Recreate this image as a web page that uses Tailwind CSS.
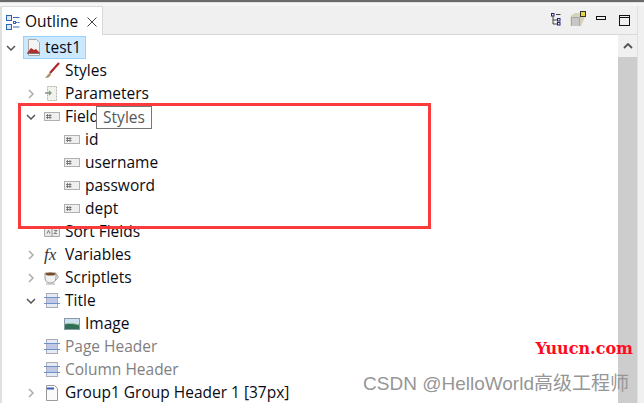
<!DOCTYPE html>
<html>
<head>
<meta charset="utf-8">
<script src="https://cdn.jsdelivr.net/npm/@tailwindcss/browser@4"></script>
</head>
<body class="bg-white">
<div class="relative w-[644px] h-[403px] overflow-hidden bg-[#f0f0f0] font-['Open_Sans','Noto_Sans',sans-serif] text-[15.5px] text-[#0a0a14]">
  <div class="h-[2px] bg-[#6a6a6a]"></div>
  <div class="h-[4px] bg-[#f6f6f6] border-t border-[#e2e2e2]"></div>
  <div class="flex h-[403px] w-[638px] border-l-2 border-[#d8d8d8] border-r border-[#e0e0e0]">
    <div class="flex flex-col w-full">
      <div class="flex h-[29px] border-b border-[#d8d8d8] bg-[#f0f0f0]">
        <div class="flex items-center w-[101px] h-[29px] bg-white border-r border-[#d8d8d8] border-t pl-[4px] pt-[2px]">
          <svg width="14" height="15" viewBox="0 0 14 15" class="mr-[5px]" fill="none">
            <rect x="0.5" y="0.5" width="5" height="5" stroke="#2f64b0" fill="#dbe8f8"/>
            <rect x="0.5" y="9.5" width="5" height="5" stroke="#2f64b0" fill="#dbe8f8"/>
            <path d="M7 2.5h6.500M10 7.500h1.500M12 7.500h1.500M7 12h6.500" stroke="#3a6cb0"/>
            <rect x="7.500" y="6.500" width="2" height="2" stroke="#2f64b0"/>
          </svg>
          <span class="text-[15.5px] leading-none">Outline</span>
          <svg width="10" height="10" viewBox="0 0 10 10" class="ml-[9px]" fill="none"><path d="M0.5 0.5l9 9M9.5 0.5l-9 9" stroke="#444"/></svg>
        </div>
        <div class="flex-1 flex items-center justify-end pr-[7px] pb-[2px]">
          <svg width="10" height="13" viewBox="0 0 10 13" fill="none" class="mr-[9px]">
            <rect x="0.5" y="0.5" width="2.5" height="2.5" stroke="#23237a"/>
            <rect x="6.5" y="5.5" width="2.5" height="2.5" stroke="#23237a"/>
            <rect x="6.5" y="9.5" width="2.5" height="2.5" stroke="#23237a"/>
            <path d="M2 3v8h4M2 7h4M5 1.500h4.500" stroke="#444"/>
          </svg>
          <svg width="16" height="16" viewBox="0 0 16 16" fill="none" class="mr-[10px]">
            <path d="M0.500 5L5 2h9l1 1v3l-4 9H0.500z" fill="#d7d3b8"/>
            <rect x="1" y="6" width="9" height="9" fill="#a8a8a8"/>
            <path d="M2 8h7M2 10h7M2 12h7M2 14h7" stroke="#e6e6e6"/>
            <rect x="10.500" y="0.500" width="5" height="5" fill="#e8d34a" stroke="#333"/>
          </svg>
          <svg width="10" height="5" viewBox="0 0 10 5" class="mb-[1px] mr-[13px]" fill="none"><rect x="0.500" y="0.500" width="9" height="3" stroke="#111"/></svg>
          <svg width="11" height="11" viewBox="0 0 11 11" class="mt-[2px]" fill="none"><rect x="0.500" y="0.500" width="10" height="10" stroke="#111"/><path d="M0 2.500h10" stroke="#111"/></svg>
        </div>
      </div>
      <div class="flex flex-1 bg-white">
        <div class="flex-1 pt-[1px]">
          <div class="flex items-center h-[23px] pl-[4px]">
            <svg width="10" height="6" viewBox="0 0 10 6" fill="none" class="mr-[7px]"><path d="M1 1l4 4 4-4" stroke="#555" stroke-width="1.500"/></svg>
            <div class="flex items-center h-[23px] w-[63px] bg-[#cce8ff] border border-[#99d1ff] pl-[2px]">
              <svg width="16" height="17" viewBox="0 0 16 17" fill="none" class="mr-[3px]">
                <path d="M2.500 0.500h8l3 3v13h-11z" fill="#f4f4f4" stroke="#aaa"/>
                <path d="M1 14l4-5 3 2 2-1 4 4z" fill="#b03030"/>
                <path d="M1 14.500h13" stroke="#777"/>
              </svg>
              <span>test1</span>
            </div>
          </div>
          <div class="flex items-center h-[23px] pl-[42px]">
            <svg width="16" height="17" viewBox="0 0 16 17" fill="none" class="mr-[5px]"><path d="M15 1L6 11" stroke="#b02828" stroke-width="2.200"/><path d="M6 10.500l-2 2-3 3.500c3 0 5-1 6-3.500z" fill="#a8906a"/></svg>
            <span>Styles</span>
          </div>
          <div class="flex items-center h-[23px] pl-[26px]">
            <svg width="6" height="10" viewBox="0 0 6 10" fill="none" class="mr-[10px]"><path d="M1 1l4 4-4 4" stroke="#aaa" stroke-width="1.500"/></svg>
            <svg width="16" height="17" viewBox="0 0 16 17" fill="none" class="mr-[5px]">
              <path d="M3.500 1.500h9v14h-9z" fill="#f2f2ec" stroke="#b5b5a8" stroke-dasharray="2 1"/>
              <path d="M1 8h6M5 6l2 2-2 2" stroke="#7f9a80" stroke-width="1.300"/>
            </svg>
            <span>Parameters</span>
          </div>
          <div class="flex items-center h-[23px] pl-[24px]">
            <svg width="10" height="6" viewBox="0 0 10 6" fill="none" class="mr-[8px]"><path d="M1 1l4 4 4-4" stroke="#555" stroke-width="1.500"/></svg>
            <svg width="16" height="10" viewBox="0 0 16 10" fill="none" class="mr-[5px]"><rect x="0.500" y="0.500" width="15" height="8" fill="#efefef" stroke="#b0b0b0"/><path d="M3.500 2v5M6 2v5M2 3.500h5.500M2 5.500h5.500" stroke="#666" stroke-width="0.800"/></svg>
            <span>Fields</span>
          </div>
          <div class="flex items-center h-[23px] pl-[62px]">
            <svg width="16" height="10" viewBox="0 0 16 10" fill="none" class="mr-[5px]"><rect x="0.500" y="0.500" width="15" height="8" fill="#efefef" stroke="#b0b0b0"/><path d="M3.500 2v5M6 2v5M2 3.500h5.500M2 5.500h5.500" stroke="#666" stroke-width="0.800"/></svg>
            <span>id</span>
          </div>
          <div class="flex items-center h-[23px] pl-[62px]">
            <svg width="16" height="10" viewBox="0 0 16 10" fill="none" class="mr-[5px]"><rect x="0.500" y="0.500" width="15" height="8" fill="#efefef" stroke="#b0b0b0"/><path d="M3.500 2v5M6 2v5M2 3.500h5.500M2 5.500h5.500" stroke="#666" stroke-width="0.800"/></svg>
            <span>username</span>
          </div>
          <div class="flex items-center h-[23px] pl-[62px]">
            <svg width="16" height="10" viewBox="0 0 16 10" fill="none" class="mr-[5px]"><rect x="0.500" y="0.500" width="15" height="8" fill="#efefef" stroke="#b0b0b0"/><path d="M3.500 2v5M6 2v5M2 3.500h5.500M2 5.500h5.500" stroke="#666" stroke-width="0.800"/></svg>
            <span>password</span>
          </div>
          <div class="flex items-center h-[23px] pl-[62px]">
            <svg width="16" height="10" viewBox="0 0 16 10" fill="none" class="mr-[5px]"><rect x="0.500" y="0.500" width="15" height="8" fill="#efefef" stroke="#b0b0b0"/><path d="M3.500 2v5M6 2v5M2 3.500h5.500M2 5.500h5.500" stroke="#666" stroke-width="0.800"/></svg>
            <span>dept</span>
          </div>
          <div class="flex items-center h-[23px] pl-[42px]">
            <svg width="16" height="14" viewBox="0 0 16 14" fill="none" class="mr-[5px]"><path d="M0.500 2.500h6.500l1 1 1-1h6.500v9h-15z" fill="#e8e8e8" stroke="#aaa"/><path d="M8 3v9" stroke="#999"/><path d="M3 8.500l1.500-3 1.500 3M10 5.500h3l-3 3h3" stroke="#666" stroke-width="0.800"/></svg>
            <span>Sort Fields</span>
          </div>
          <div class="flex items-center h-[23px] pl-[26px]">
            <svg width="6" height="10" viewBox="0 0 6 10" fill="none" class="mr-[10px]"><path d="M1 1l4 4-4 4" stroke="#aaa" stroke-width="1.500"/></svg>
            <span class="w-[16px] mr-[5px] font-['Liberation_Serif',serif] italic text-[17px] leading-none text-[#333]">fx</span>
            <span>Variables</span>
          </div>
          <div class="flex items-center h-[23px] pl-[26px]">
            <svg width="6" height="10" viewBox="0 0 6 10" fill="none" class="mr-[10px]"><path d="M1 1l4 4-4 4" stroke="#aaa" stroke-width="1.500"/></svg>
            <svg width="16" height="14" viewBox="0 0 16 14" fill="none" class="mr-[5px]"><path d="M1 2h11v5c0 3-2 5-5.500 5S1 10 1 7z" fill="#f2f2f2" stroke="#999"/><ellipse cx="6.500" cy="3" rx="5" ry="1.600" fill="#7a4a25"/><path d="M12 4c3 0 3 4-1 5" stroke="#999"/><path d="M2 13h9" stroke="#aaa"/></svg>
            <span>Scriptlets</span>
          </div>
          <div class="flex items-center h-[23px] pl-[24px]">
            <svg width="10" height="6" viewBox="0 0 10 6" fill="none" class="mr-[8px]"><path d="M1 1l4 4 4-4" stroke="#555" stroke-width="1.500"/></svg>
            <svg width="16" height="15" viewBox="0 0 16 15" fill="none" class="mr-[5px]"><rect x="2.500" y="0.500" width="11" height="14" fill="#e6eaf2" stroke="#aab"/><rect x="3" y="5" width="10" height="5" fill="#c0c8e6"/><path d="M0 4.500h16M0 10.500h16" stroke="#7090cc"/></svg>
            <span>Title</span>
          </div>
          <div class="flex items-center h-[23px] pl-[62px]">
            <svg width="16" height="12" viewBox="0 0 16 12" fill="none" class="mr-[5px]"><rect x="0.500" y="0.500" width="15" height="11" fill="#cfe2f2" stroke="#8a9aa8"/><path d="M1 6h14v5H1z" fill="#2f6f55"/><path d="M1 6c4-1 8-1 14 1" stroke="#9fc0a0"/></svg>
            <span>Image</span>
          </div>
          <div class="flex items-center h-[23px] pl-[42px] text-[#7f7f7f]">
            <svg width="16" height="15" viewBox="0 0 16 15" fill="none" class="mr-[5px]"><rect x="2.500" y="0.500" width="11" height="14" fill="#e6eaf2" stroke="#aab"/><rect x="3" y="5" width="10" height="5" fill="#c0c8e6"/><path d="M0 4.500h16M0 10.500h16" stroke="#7090cc"/></svg>
            <span>Page Header</span>
          </div>
          <div class="flex items-center h-[23px] pl-[42px] text-[#7f7f7f]">
            <svg width="16" height="15" viewBox="0 0 16 15" fill="none" class="mr-[5px]"><rect x="2.500" y="0.500" width="11" height="14" fill="#e6eaf2" stroke="#aab"/><rect x="3" y="5" width="10" height="5" fill="#c0c8e6"/><path d="M0 4.500h16M0 10.500h16" stroke="#7090cc"/></svg>
            <span>Column Header</span>
          </div>
          <div class="flex items-center h-[23px] pl-[26px]">
            <svg width="6" height="10" viewBox="0 0 6 10" fill="none" class="mr-[10px]"><path d="M1 1l4 4-4 4" stroke="#aaa" stroke-width="1.500"/></svg>
            <svg width="16" height="16" viewBox="0 0 16 16" fill="none" class="mr-[5px]"><path d="M2.500 0.500h8l3 3v12h-11z" fill="#fafafa" stroke="#9a9a9a"/><path d="M3 3.500h7" stroke="#3a5cc0" stroke-width="2"/></svg>
            <span>Group1 Group Header 1 [37px]</span>
          </div>
        </div>
        <div class="w-[19px] bg-[#f0f0f0] flex flex-col">
          <div class="h-[22px] flex items-center justify-center">
            <svg width="10" height="6" viewBox="0 0 10 6" fill="none"><path d="M1 5l4-4 4 4" stroke="#555" stroke-width="1.800"/></svg>
          </div>
          <div class="flex-1 bg-[#cdcdcd]"></div>
        </div>
      </div>
    </div>
  </div>
  <div class="absolute left-[18px] top-[103px] w-[413px] h-[126px] border-[3px] border-[#fb3b3b]"></div>
  <div class="absolute left-[96px] top-[106px] h-[23px] w-[56px] flex items-center justify-center bg-white border border-[#767676] text-[#575757] text-[15.5px]">Styles</div>
  <div class="absolute right-[11px] top-[341px] font-['DejaVu_Serif',serif] font-bold text-[16px] leading-none text-[#ff0a1e]">Yuucn.com</div>
  <div class="absolute right-[15px] top-[374px] font-['Liberation_Sans','Noto_Sans_CJK_SC',sans-serif] text-[19px] leading-none text-[#969696]">CSDN @HelloWorld高级工程师</div>
</div>
</body>
</html>
